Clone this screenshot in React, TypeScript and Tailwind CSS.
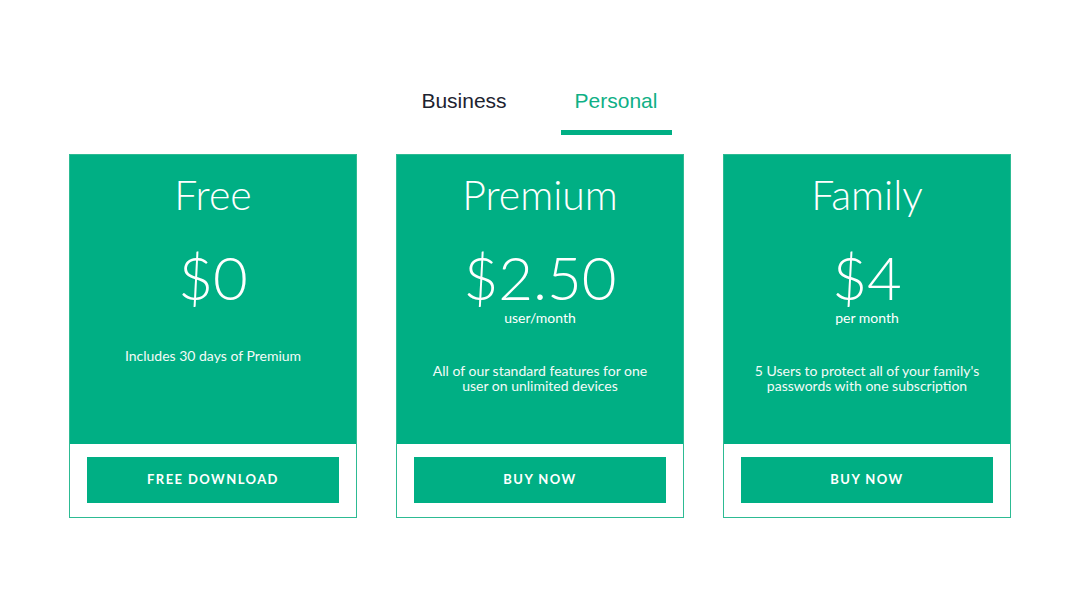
import { useState } from "react";

type Plan = {
  name: string;
  price: string;
  unit?: string;
  desc: string[];
  cta: string;
};

const plans: Plan[] = [
  { name: "Free", price: "$0", desc: ["Includes 30 days of Premium"], cta: "Free Download" },
  {
    name: "Premium",
    price: "$2.50",
    unit: "user/month",
    desc: ["All of our standard features for one", "user on unlimited devices"],
    cta: "Buy Now",
  },
  {
    name: "Family",
    price: "$4",
    unit: "per month",
    desc: ["5 Users to protect all of your family's", "passwords with one subscription"],
    cta: "Buy Now",
  },
];

function PlanCard({ plan }: { plan: Plan }) {
  return (
    <div className="flex w-[288px] flex-col border border-[#2dbb93] bg-white">
      <div className="flex h-[289px] flex-col items-center bg-[#00af84] pt-[16px] text-center text-white">
        <h2 className="text-[41px] font-light leading-[48px]">{plan.name}</h2>
        <div className="mt-[28px] text-[60px] font-light leading-none">{plan.price}</div>
        {plan.unit ? (
          <div className="mt-[4px] text-[14px] leading-[14px]">{plan.unit}</div>
        ) : null}
        <div className={`${plan.unit ? "mt-[38px]" : "mt-[41px]"} text-[14px] leading-[15px] text-[#f4fbf8]`}>
          {plan.desc.map((line) => (
            <div key={line}>{line}</div>
          ))}
        </div>
      </div>
      <div className="px-[17px] pt-[13px] pb-[14px]">
        <button
          type="button"
          className="flex h-[46px] w-full items-center justify-center bg-[#00af84] text-[13px] font-bold uppercase tracking-[0.11em] text-white"
        >
          {plan.cta}
        </button>
      </div>
    </div>
  );
}

export default function App() {
  const [tab, setTab] = useState<"business" | "personal">("personal");

  return (
    <div className="min-h-[608px] w-full bg-white pt-[84px] font-['Lato',sans-serif]">
      {/* Onglets */}
      <div className="flex justify-center gap-[41px]">
        {(["business", "personal"] as const).map((t) => (
          <button
            key={t}
            type="button"
            onClick={() => setTab(t)}
            className={`flex h-[51px] w-[111px] flex-col items-center justify-between font-['Liberation_Sans',Arial,sans-serif] text-[21px] leading-[34px] ${
              tab === t ? "text-[#0fb086]" : "text-[#1d2330]"
            }`}
          >
            <span>{t === "business" ? "Business" : "Personal"}</span>
            <span className={`h-[5px] w-full ${tab === t ? "bg-[#00af84]" : "bg-transparent"}`} />
          </button>
        ))}
      </div>

      {/* Cartes */}
      <div className="mt-[19px] flex justify-center gap-[39px]">
        {plans.map((p) => (
          <PlanCard key={p.name} plan={p} />
        ))}
      </div>
    </div>
  );
}
